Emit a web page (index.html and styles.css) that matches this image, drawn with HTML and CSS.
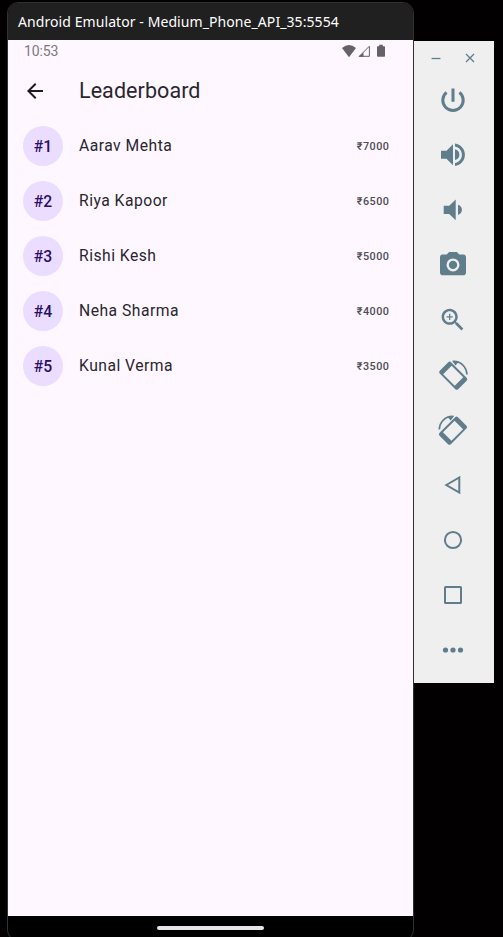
FILE: index.html
```html
<!DOCTYPE html>
<html lang="en">
<head>
<meta charset="utf-8">
<title>Android Emulator</title>
<link rel="stylesheet" href="styles.css">
</head>
<body>
<div class="desktop">
  <section class="phone">
    <header class="titlebar">Android Emulator - Medium_Phone_API_35:5554</header>
    <main class="screen">
      <div class="status">
        <span class="clock">10:53</span>
        <svg class="status-icons" width="45" height="16" viewBox="0 0 45 16">
          <path d="M1 5Q8-.8 15 5L8 14.2Z"/>
          <path class="signal" d="M28.4 3.2V13.3H18.3Z"/>
          <path d="M22.500 9.500V13.800H17.500Z"/>
          <path d="M38.2 1.8h3.6v1.4h1.4q.8 0 .8.8v9q0 .8-.8.8h-6.4q-.8 0-.8-.8V4q0-.8.8-.8h1.4z"/>
        </svg>
      </div>
      <div class="appbar">
        <svg class="back" width="24" height="24" viewBox="0 0 24 24"><path d="M20 11H7.83l5.59-5.59L12 4l-8 8 8 8 1.41-1.41L7.83 13H20v-2z"/></svg>
        <h1>Leaderboard</h1>
      </div>
      <ol class="list">
        <li><span class="rank">#1</span><span class="name">Aarav Mehta</span><span class="amount">₹7000</span></li>
        <li><span class="rank">#2</span><span class="name">Riya Kapoor</span><span class="amount">₹6500</span></li>
        <li><span class="rank">#3</span><span class="name">Rishi Kesh</span><span class="amount">₹5000</span></li>
        <li><span class="rank">#4</span><span class="name">Neha Sharma</span><span class="amount">₹4000</span></li>
        <li><span class="rank">#5</span><span class="name">Kunal Verma</span><span class="amount">₹3500</span></li>
      </ol>
    </main>
    <footer class="navbar"><span class="handle"></span></footer>
  </section>
  <aside class="toolbar">
    <div class="window-buttons">
      <svg width="10" height="10" viewBox="0 0 10 10"><path class="line thin" d="M.5 5.500h9"/></svg>
      <svg width="10" height="10" viewBox="0 0 10 10"><path class="line thin" d="M1 1l8 8M9 1l-8 8"/></svg>
    </div>
    <div class="tools">
      <svg viewBox="0 0 32 32"><path class="line power" d="M16 4.500v13.200M9.500 8.400a10.200 10.200 0 1 0 13 0"/></svg>
      <svg viewBox="0 0 32 32"><path d="M4 11.8h5.5L16 5.3v20.9l-6.500-6.500H4zM18 10.300q4.400 1.300 4.400 5.400T18 21.100zM18 4.600c5.500.7 9.900 5.300 9.900 11.200s-4.400 10.500-9.900 11.200v-2.900c3.900-.7 6.900-4 6.900-8.300s-3-7.600-6.900-8.300z"/></svg>
      <svg viewBox="0 0 32 32"><path d="M6.700 11.800h5.500l6.500-6.300v20.800l-6.500-6.400H6.700zM21 10.700q3.900 1.300 3.900 5.100T21 20.900z"/></svg>
      <svg viewBox="0 0 32 32"><path fill-rule="evenodd" transform="translate(.4 .3) scale(1.3)" d="M9 2L7.170 4H4c-1.100 0-2 .900-2 2v12c0 1.100.900 2 2 2h16c1.100 0 2-.900 2-2V6c0-1.100-.900-2-2-2h-3.170L15 2zM12 7a5 5 0 1 0 0 10 5 5 0 1 0 0-10zM12 8.800a3.200 3.200 0 1 1 0 6.400 3.200 3.200 0 1 1 0-6.400z"/></svg>
      <svg viewBox="0 0 32 32"><path transform="translate(.9 1) scale(1.240)" d="M15.5 14h-.79l-.28-.27C15.410 12.590 16 11.110 16 9.500 16 5.910 13.090 3 9.500 3S3 5.910 3 9.500 5.910 16 9.500 16c1.610 0 3.090-.590 4.230-1.570l.27.28v.79l5 4.990L20.490 19l-4.990-5zm-6 0C7.010 14 5 11.990 5 9.500S7.010 5 9.500 5 14 7.010 14 9.500 11.990 14 9.500 14zm2.500-4h-2v2H9v-2H7V9h2V7h1v2h2v1z"/></svg>
      <svg viewBox="0 0 32 32"><g id="rotate"><path fill-rule="evenodd" transform="rotate(45 16.200 16.700)" d="M5.200 8.700h22q2 0 2 2v12q0 2-2 2h-22q-2 0-2-2V10.700q0-2 2-2zM8 10.700v12h16.400V10.700z"/><path class="line arc" d="M16 2.500C23.500 2 29.500 7.500 29.900 15.500"/><path d="M15 1.700l7 .900-3.500 3.900z"/></g></svg>
      <svg viewBox="0 0 32 32"><use href="#rotate" transform="matrix(-1 0 0 1 32.200 0)"/></svg>
      <svg viewBox="0 0 32 32"><path class="line" d="M9.300 16L22.300 8.500v15z"/></svg>
      <svg viewBox="0 0 32 32"><circle class="line" cx="16" cy="16" r="8.100"/></svg>
      <svg viewBox="0 0 32 32"><rect class="line" x="8" y="8" width="16" height="16" rx=".6"/></svg>
      <svg viewBox="0 0 32 32"><circle cx="8.500" cy="16" r="2.600"/><circle cx="16" cy="16" r="2.600"/><circle cx="23.500" cy="16" r="2.600"/></svg>
    </div>
  </aside>
</div>
</body>
</html>
```
FILE: styles.css
```css
* { box-sizing: border-box; }
body { margin: 0; background: #030001; font-family: Roboto, sans-serif; }
.desktop { display: flex; align-items: flex-start; height: 937px; padding: 2px 0 0 7px; overflow: hidden; }
.phone { display: flex; flex-direction: column; width: 407px; height: 939px; border: 1px solid #303030; border-radius: 11px; background: #000; overflow: hidden; flex: none; }
.titlebar { height: 37px; padding-left: 10px; background: #202020; color: #fff; font: 14px/37px "Noto Sans", sans-serif; letter-spacing: .08px; white-space: nowrap; }
.screen { height: 876px; background: #fef7ff; color: #29262d; }
.status { display: flex; justify-content: space-between; height: 23px; padding: 0 27px 0 16px; color: #7d797f; font-size: 14px; line-height: 23px; letter-spacing: -.1px; }
.status-icons { margin-top: 3px; fill: #656168; }
.status-icons .signal { fill: none; stroke: #656168; stroke-width: 1; }
.appbar { display: flex; align-items: center; height: 55px; padding-left: 15px; gap: 32px; }
.back { fill: #1d1b20; }
h1 { margin: 0; font-size: 21.5px; font-weight: 400; line-height: 28px; letter-spacing: .07px; }
.list { margin: 0; padding: 0; list-style: none; }
.list li { display: flex; align-items: center; height: 55.1px; padding: 0 23.5px 0 15px; }
.rank { width: 40px; height: 40px; border-radius: 50%; background: #eaddff; color: #2b0d66; font-size: 15.7px; font-weight: 500; line-height: 41px; text-align: center; }
.name { flex: 1; margin-left: 16px; font-size: 15.7px; line-height: 20px; letter-spacing: .48px; }
.amount { padding-top: 1px; color: #504c56; font-size: 10.8px; font-weight: 500; letter-spacing: .5px; }
.navbar { flex: 1; display: flex; justify-content: center; padding-top: 10px; }
.handle { width: 107px; height: 4px; border-radius: 2px; background: #e6e6e6; }
.toolbar { width: 80px; height: 642px; margin-top: 39px; background: #efefef; color: #607d8b; flex: none; }
.window-buttons { display: flex; gap: 24px; height: 31px; padding: 12px 0 0 17px; }
.toolbar svg { fill: currentColor; flex: none; }
.tools { display: flex; flex-direction: column; align-items: center; gap: 23px; padding: 12px 2px 0 0; }
.tools svg { width: 32px; height: 32px; }
.toolbar .line { fill: none; stroke: currentColor; stroke-width: 2; }
.toolbar .power { stroke-width: 3; }
.toolbar .thin { stroke-width: 1.3; }
.toolbar .arc { stroke-width: 1.7; }
```
